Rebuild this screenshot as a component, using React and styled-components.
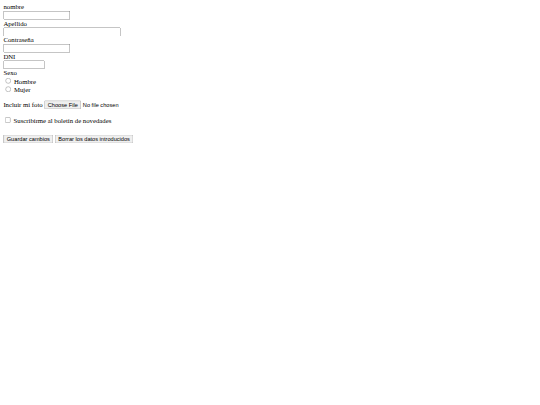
import React from "react";
import styled, { createGlobalStyle } from "styled-components";

const Global = createGlobalStyle`
  html, body { margin: 0; padding: 0; background: #fff; overflow: hidden; }
`;

const Page = styled.div`
  width: 1280px;
  box-sizing: border-box;
  transform: scale(0.421875);
  transform-origin: 0 0;
  padding: 8px;
  font-family: "Liberation Serif", "Times New Roman", serif;
  font-size: 16px;
  color: #000;
`;

const Form = styled.form`
  margin: 0;
`;

const TextInput = styled.input`
  font-family: "Liberation Sans", Arial, sans-serif;
  font-size: 13.333px;
  width: ${(p) => p.$w}px;
  box-sizing: border-box;
  margin: 0;
`;

const Radio = styled.input`
  margin: 3px 3px 0 5px;
`;

const Para = styled.p`
  margin: ${(p) => p.$top ?? 16}px 0 16px;
`;

const FileInput = styled.input`
  font-family: "Liberation Sans", Arial, sans-serif;
  font-size: 13.333px;
`;

const Check = styled.input`
  margin: 3px 3px 3px 4px;
`;

const Button = styled.input`
  font-family: "Liberation Sans", Arial, sans-serif;
  font-size: 13.333px;
  margin: 0;
`;

export default function App() {
  return (
    <Page>
      <Global />
      <Form onSubmit={(e) => e.preventDefault()}>
        nombre
        <br />
        <TextInput type="text" $w={158} />
        <br />
        Apellido
        <br />
        <TextInput type="text" $w={278} />
        <br />
        Contraseña
        <br />
        <TextInput type="password" $w={158} />
        <br />
        DNI
        <br />
        <TextInput type="text" $w={98} />
        <br />
        Sexo
        <br />
        <Radio type="radio" name="sexo" value="h" /> Hombre
        <br />
        <Radio type="radio" name="sexo" value="m" /> Mujer
        <br />
        <Para>
          Incluir mi foto <FileInput type="file" />
        </Para>
        <Para>
          <Check type="checkbox" /> Suscribirme al boletín de novedades
        </Para>
        <Para $top={24}>
          <Button type="button" value="Guardar cambios" />{" "}
          <Button type="reset" value="Borrar los datos introducidos" />
        </Para>
      </Form>
    </Page>
  );
}
